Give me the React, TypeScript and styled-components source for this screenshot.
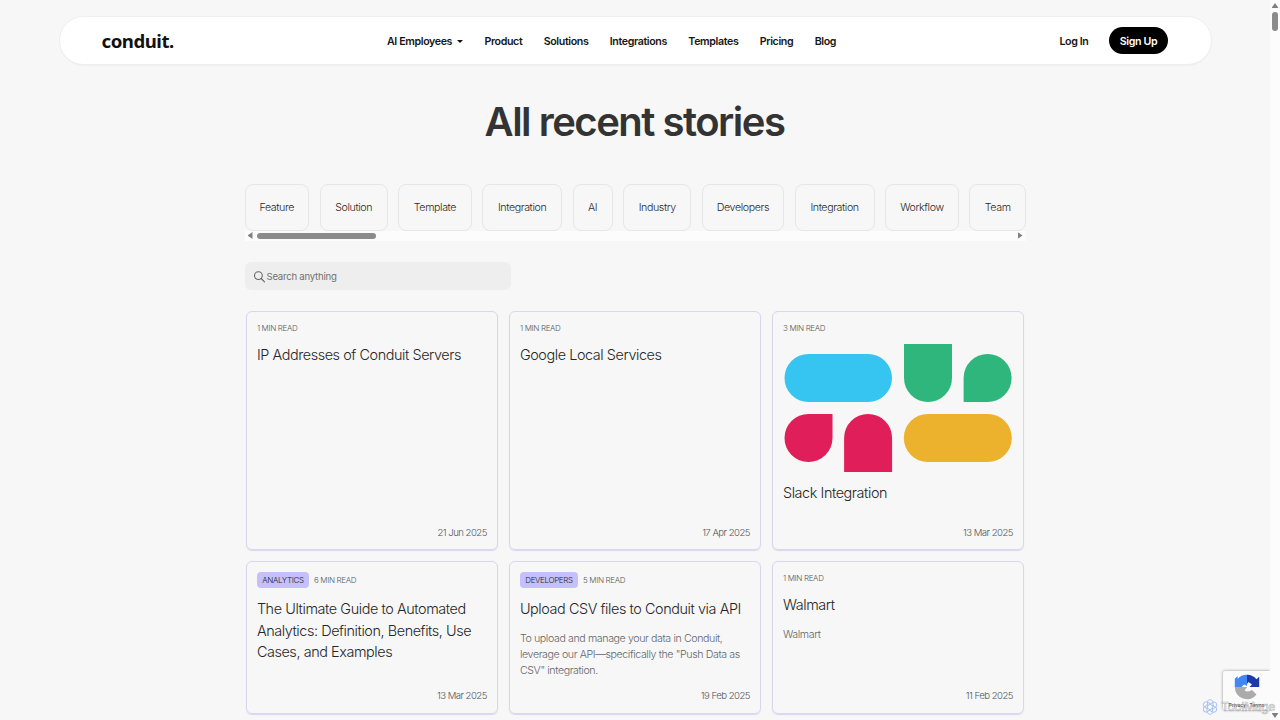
import React from "react";
import styled, { createGlobalStyle } from "styled-components";

const GlobalStyle = createGlobalStyle`
  * { box-sizing: border-box; }
  body { margin: 0; background: #f7f7f7; font-family: Inter, "Liberation Sans", sans-serif; color: #333; overflow: hidden; }
`;

const Window = styled.div`
  display: flex;
  width: 1280px;
  height: 720px;
  overflow: hidden;
  position: relative;
`;

const Page = styled.div`
  width: 1270px;
  padding-top: 16px;
  display: flex;
  flex-direction: column;
  align-items: center;
`;

const Header = styled.header`
  width: 1153px;
  height: 49px;
  flex: none;
  display: flex;
  align-items: center;
  padding: 0 43px 0 42px;
  background: #fff;
  border: 1px solid #efefef;
  border-radius: 25px;
  box-shadow: 0 1px 1px rgba(0, 0, 0, 0.03);
`;

const Logo = styled.a`
  width: 285.5px;
  font: 700 18.6px/24px "Noto Sans", sans-serif;
  letter-spacing: -0.025em;
  color: #111;
`;

const Nav = styled.nav`
  display: flex;
  gap: 21.4px;
  flex: 1;
`;

const NavLink = styled.a`
  display: flex;
  align-items: center;
  padding-top: 2px;
  font-size: 10.667px;
  font-weight: 600;
  line-height: 16px;
  letter-spacing: -0.036em;
  color: #161616;
  white-space: nowrap;
`;

const Caret = styled.span`
  margin-left: 5px;
  border: 3px solid transparent;
  border-top-color: #111;
  border-bottom: 0;
`;

const Account = styled.div`
  display: flex;
  align-items: center;
  gap: 20px;
`;

const SignUp = styled(NavLink)`
  justify-content: center;
  width: 59px;
  height: 27px;
  padding-left: 1px;
  border-radius: 14px;
  background: #000;
  color: #fff;
`;

const Title = styled.h1`
  margin: 32px 1px 0 0;
  font-size: 40px;
  font-weight: 600;
  line-height: 50px;
  letter-spacing: -0.0373em;
  color: #333;
`;

const Content = styled.main`
  width: 781px;
  margin-top: 37px;
  display: flex;
  flex-direction: column;
`;

const Chips = styled.div`
  display: flex;
  gap: 10.67px;
  height: 47px;
`;

const Chip = styled.button<{ $width: number }>`
  width: ${(p) => p.$width}px;
  flex: none;
  padding: 0;
  border: 1px solid #e6e6e6;
  border-radius: 8px;
  background: transparent;
  font: 350 10.667px/16px Inter, sans-serif;
  letter-spacing: -0.037em;
  color: #2a2a2a;
`;

const TrackX = styled.div`
  height: 10px;
  display: flex;
  align-items: center;
  padding: 0 3px 1px;
  background: #fcfcfc;
`;

const ThumbX = styled.div`
  width: 119px;
  height: 6px;
  margin: 0 auto 0 4px;
  border-radius: 3px;
  background: #8b8b8b;
`;

const Arrow = styled.span<{ $dir: "left" | "right" | "up" | "down" }>`
  width: 5px;
  height: 7px;
  background: #808080;
  clip-path: ${(p) =>
    ({
      left: "polygon(100% 0, 100% 100%, 0 50%)",
      right: "polygon(0 0, 0 100%, 100% 50%)",
      up: "polygon(50% 0, 100% 100%, 0 100%)",
      down: "polygon(0 0, 100% 0, 50% 100%)",
    })[p.$dir]};
  ${(p) => (p.$dir === "up" || p.$dir === "down" ? "width: 7px; height: 5px;" : "")}
`;

const Search = styled.label`
  width: 266px;
  height: 28px;
  margin-top: 21px;
  display: flex;
  align-items: center;
  gap: 1px;
  padding: 1px 0 0 9px;
  border-radius: 6px;
  background: #eee;
  font-size: 9.6px;
  letter-spacing: -0.025em;
  color: #717171;
`;

const Grid = styled.div`
  display: grid;
  grid-template-columns: repeat(3, 252.4px);
  grid-template-rows: 239px 153.3px;
  gap: 10.67px;
  margin: 21px 0 0 1px;
`;

const Card = styled.article`
  display: flex;
  flex-direction: column;
  padding: 10px 10px 9.5px 10.4px;
  border: 1px solid #d9d6ee;
  border-radius: 6px;
  box-shadow: 0 1px 1px rgba(120, 110, 190, 0.22);
`;

const Meta = styled.div`
  display: flex;
  align-items: center;
  gap: 5px;
  min-height: 12px;
  font-size: 8px;
  font-weight: 350;
  line-height: 12px;
  letter-spacing: -0.043em;
  color: #555b60;
`;

const Badge = styled.span`
  height: 16px;
  margin-bottom: 0.5px;
  padding: 0 5.3px;
  border-radius: 4px;
  background: #c5c0fb;
  line-height: 16px;
  color: #222;
`;

const CardTitle = styled.h2`
  margin: 10.1px 0 0;
  font-size: 14.4px;
  font-weight: 350;
  line-height: 21.33px;
  letter-spacing: -0.029em;
  color: #262626;
  white-space: pre;
`;

const Summary = styled.p`
  margin: 11.7px 0 0;
  font-size: 10.667px;
  font-weight: 350;
  line-height: 16px;
  letter-spacing: -0.038em;
  color: #62686d;
  white-space: pre;
`;

const Stamp = styled.time`
  margin-top: auto;
  align-self: flex-end;
  font-size: 9.6px;
  font-weight: 350;
  line-height: 14px;
  letter-spacing: -0.055em;
  color: #50565b;
`;

const SlackArt = styled.svg`
  display: block;
  flex: none;
  width: 230px;
  height: 128px;
  margin-top: 10px;
`;

const TrackY = styled.div`
  width: 10px;
  height: 720px;
  display: flex;
  flex-direction: column;
  align-items: center;
  justify-content: space-between;
  padding: 3px 0 2px;
  background: #fcfcfc;
`;

const ThumbY = styled.div`
  width: 6px;
  height: 19px;
  margin: 4px 0 auto;
  border-radius: 3px;
  background: #8b8b8b;
`;

const Captcha = styled.div`
  position: absolute;
  right: 10px;
  bottom: 10px;
  width: 47px;
  height: 39px;
  display: flex;
  flex-direction: column;
  align-items: center;
  gap: 1px;
  padding-top: 3px;
  background: #fbfbfb;
  border-radius: 2px 0 0 2px;
  box-shadow: 0 0 3px #888;
  clip-path: inset(-4px 0 -4px -4px);
  font: 5.3px/8px Roboto, sans-serif;
  color: #222;
  white-space: nowrap;
`;

const Watermark = styled.div`
  position: absolute;
  right: 5px;
  bottom: 5px;
  display: flex;
  align-items: center;
  gap: 3px;
  font: 500 11.8px/16px Inter, sans-serif;
  letter-spacing: -0.02em;
  color: rgba(225, 225, 225, 0.5);
  -webkit-text-stroke: 0.5px rgba(130, 130, 130, 0.6);
`;

const chips: [string, number][] = [
  ["Feature", 64.5], ["Solution", 68], ["Template", 73.3], ["Integration", 79.7], ["AI", 40],
  ["Industry", 68], ["Developers", 82], ["Integration", 80], ["Workflow", 73.5], ["Team", 56.6],
];

type Story = { tag?: string; read: string; title: string; text?: string; date: string; art?: boolean };

const stories: Story[] = [
  { read: "1 MIN READ", title: "IP Addresses of Conduit Servers", date: "21 Jun 2025" },
  { read: "1 MIN READ", title: "Google Local Services", date: "17 Apr 2025" },
  { read: "3 MIN READ", title: "Slack Integration", date: "13 Mar 2025", art: true },
  {
    tag: "ANALYTICS",
    read: "6 MIN READ",
    title: "The Ultimate Guide to Automated\nAnalytics: Definition, Benefits, Use\nCases, and Examples",
    date: "13 Mar 2025",
  },
  {
    tag: "DEVELOPERS",
    read: "5 MIN READ",
    title: "Upload CSV files to Conduit via API",
    text: "To upload and manage your data in Conduit,\nleverage our API—specifically the \"Push Data as\nCSV\" integration.",
    date: "19 Feb 2025",
  },
  { read: "1 MIN READ", title: "Walmart", text: "Walmart", date: "11 Feb 2025" },
];

export default function App() {
  return (
    <Window>
      <GlobalStyle />
      <Page>
        <Header>
          <Logo>conduit.</Logo>
          <Nav>
            <NavLink>AI Employees<Caret /></NavLink>
            {["Product", "Solutions", "Integrations", "Templates", "Pricing", "Blog"].map((n) => (
              <NavLink key={n}>{n}</NavLink>
            ))}
          </Nav>
          <Account>
            <NavLink>Log In</NavLink>
            <SignUp>Sign Up</SignUp>
          </Account>
        </Header>
        <Title>All recent stories</Title>
        <Content>
          <Chips>
            {chips.map(([label, width], i) => (
              <Chip key={i} $width={width}>{label}</Chip>
            ))}
          </Chips>
          <TrackX>
            <Arrow $dir="left" />
            <ThumbX />
            <Arrow $dir="right" />
          </TrackX>
          <Search>
            <svg width="12" height="12" viewBox="0 0 12 12" fill="none" stroke="#666" strokeWidth="1.1" strokeLinecap="round">
              <circle cx="4.4" cy="4.6" r="3.9" />
              <path d="M7.2 7.5 10.5 10.8" />
            </svg>
            Search anything
          </Search>
          <Grid>
            {stories.map((s) => (
              <Card key={s.title}>
                <Meta>
                  {s.tag && <Badge>{s.tag}</Badge>}
                  <span>{s.read}</span>
                </Meta>
                {s.art && (
                  <SlackArt viewBox="0 0 230 128">
                    <rect x="1.5" y="10" width="107.5" height="48" rx="24" fill="#36c5f0" />
                    <path d="M121 0h48v34a24 24 0 0 1-48 0z" fill="#2eb67d" />
                    <path d="M180.6 58V34a24 24 0 1 1 24 24z" fill="#2eb67d" />
                    <path d="M49.5 70v24a24 24 0 1 1-24-24z" fill="#e01e5a" />
                    <path d="M61.1 128V94a24 24 0 0 1 48 0v34z" fill="#e01e5a" />
                    <rect x="120.8" y="70" width="108" height="48" rx="24" fill="#ecb22e" />
                  </SlackArt>
                )}
                <CardTitle>{s.title}</CardTitle>
                {s.text && <Summary>{s.text}</Summary>}
                <Stamp>{s.date}</Stamp>
              </Card>
            ))}
          </Grid>
        </Content>
      </Page>
      <TrackY>
        <Arrow $dir="up" />
        <ThumbY />
        <Arrow $dir="down" />
      </TrackY>
      <Captcha>
        <svg width="26" height="26" viewBox="0 0 26 26">
          <path d="M13 .8A12 12 0 0 0 3.6 5V2L.8 4.8V13H7.500l2.500-2.600L13 12z" fill="#4285f4" />
          <path d="M13 .8a12 12 0 0 1 9.500 4.500l2.700-2.500V13H15.500l2.500-2.600L14.500 8 13 10z" fill="#1c3aa9" />
          <path d="M.8 13A12.200 12.200 0 0 0 22.500 20.500l-4.500-4.500a7 7 0 0 1-7.500.5L13 13z" fill="#ababab" />
        </svg>
        Privacy · Terms
      </Captcha>
      <Watermark>
        <svg width="16" height="16" viewBox="0 0 16 16" fill="none" stroke="#a9c3f5" strokeWidth="1">
          {[0, 60, 120, 180, 240, 300].map((a) => (
            <path key={a} transform={`rotate(${a} 8 8)`} d="M8 5.2 11 7V3.6A3 3 0 0 0 5.6 1.9L5.3 6.4" />
          ))}
        </svg>
        ToolMage
      </Watermark>
    </Window>
  );
}
